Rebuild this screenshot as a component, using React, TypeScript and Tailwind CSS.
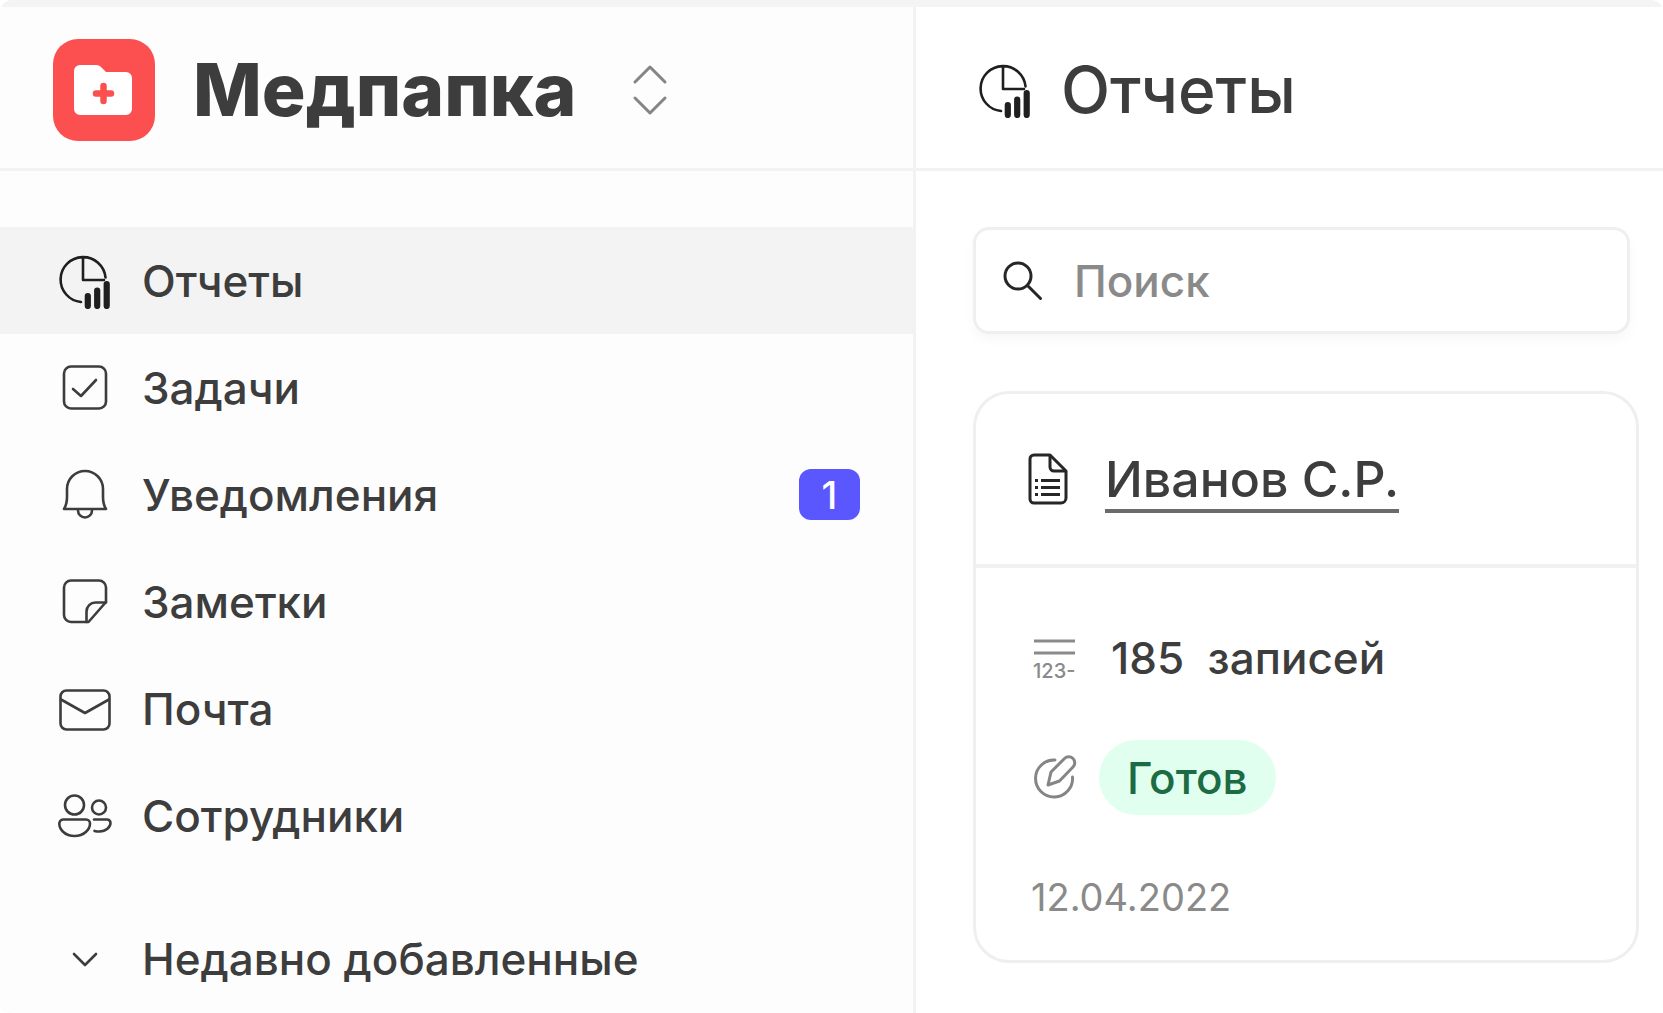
import type { ReactNode } from "react";

type IconProps = { className?: string };

function ReportIcon({ className }: IconProps) {
  return (
    <svg viewBox="0 0 54 56" fill="none" className={className} aria-hidden="true">
      <path d="M23 49A22.500 22.500 0 1 1 47.500 24.500M25 4v23h21" stroke="#1f1f1f" strokeWidth="2.600" strokeLinecap="round" strokeLinejoin="round" />
      <path d="M29.800 43V53M39.200 37.500V53M48.700 31V53" stroke="#1f1f1f" strokeWidth="6.200" strokeLinecap="round" />
    </svg>
  );
}

function LineIcon({ children }: { children: ReactNode }) {
  return (
    <svg viewBox="0 0 54 56" fill="none" stroke="#3d3d3d" strokeWidth="2.600" strokeLinecap="round" strokeLinejoin="round" className="h-14 w-[54px]" aria-hidden="true">
      {children}
    </svg>
  );
}

function TaskIcon() {
  return (
    <LineIcon>
      <rect x="6" y="6.500" width="42" height="42" rx="7" />
      <path d="M15 29l8 7 15-16" />
    </LineIcon>
  );
}

function BellIcon() {
  return (
    <LineIcon>
      <path d="M6 42c2.500-4 3-7 3-12V22a18 18 0 0 1 36 0v8c0 5 .5 8 3 12z" />
      <path d="M20 43.500a7 7 0 0 0 14 0" />
    </LineIcon>
  );
}

function NoteIcon() {
  return (
    <LineIcon>
      <path d="M13 6.500h28a7 7 0 0 1 7 7v14.500L30.500 48H13a7 7 0 0 1-7-7V13.500a7 7 0 0 1 7-7z" />
      <path d="M28.500 48V37.500a9 9 0 0 1 9-9H48" />
    </LineIcon>
  );
}

function MailIcon() {
  return (
    <LineIcon>
      <rect x="2.500" y="9.500" width="49" height="39" rx="6" />
      <path d="M3 18.500l24 13.500L51 18.500" />
    </LineIcon>
  );
}

function PeopleIcon() {
  return (
    <LineIcon>
      <circle cx="16.500" cy="17" r="9.500" />
      <circle cx="41" cy="19.500" r="7" />
      <path d="M5 31.500h23a4 4 0 0 1 4 4c0 6-6 12.500-15.500 12.500S1.300 41.500 1.300 35.500a4 4 0 0 1 3.700-4z" />
      <path d="M36 31.500h13a3.500 3.500 0 0 1 3.500 3.500c0 4-4.500 8.500-11 8.500a20 20 0 0 1-5-.6" />
    </LineIcon>
  );
}

const items = [
  { label: "Отчеты", icon: <ReportIcon className="h-14 w-[54px]" />, active: true },
  { label: "Задачи", icon: <TaskIcon /> },
  { label: "Уведомления", icon: <BellIcon />, count: 1 },
  { label: "Заметки", icon: <NoteIcon /> },
  { label: "Почта", icon: <MailIcon /> },
  { label: "Сотрудники", icon: <PeopleIcon /> },
];

function Sidebar() {
  return (
    <aside className="flex w-[916px] shrink-0 flex-col border-r-3 border-[#f2f2f2] bg-[#fdfdfd]">
      <div className="flex h-[164px] items-center border-b-3 border-[#f2f2f2] pt-1 pl-[53px]">
        <svg viewBox="0 0 102 102" className="size-[102px]" aria-hidden="true">
          <rect width="102" height="102" rx="25" fill="#fc5050" />
          <path d="M27 26h16c3 0 4 1 6 3l4 4h20a6 6 0 0 1 6 6v31a6 6 0 0 1-6 6H27a6 6 0 0 1-6-6V32a6 6 0 0 1 6-6z" fill="#fff" />
          <path d="M50.500 47v15M43 54.500h15" stroke="#fc5050" strokeWidth="6.500" strokeLinecap="round" />
        </svg>
        <span className="ml-[38px] text-[73px] leading-[88px] font-extrabold">Медпапка</span>
        <button type="button" aria-label="Сменить пространство" className="ml-[56px]">
          <svg viewBox="0 0 36 52" fill="none" stroke="#858585" strokeWidth="3" strokeLinecap="round" strokeLinejoin="round" className="h-[52px] w-9">
            <path d="M3 18L18 3l15 15M3 34l15 15 15-15" />
          </svg>
        </button>
      </div>
      <nav className="mt-14 flex flex-col">
        {items.map((item) => (
          <a
            key={item.label}
            href="#"
            aria-current={item.active ? "page" : undefined}
            className={`flex h-[107px] items-center pr-[53px] pl-[58px] ${item.active ? "bg-[#f3f3f3]" : ""}`}
          >
            {item.icon}
            <span className="ml-[30px] flex-1">{item.label}</span>
            {item.count && (
              <span className="flex h-[51px] w-[61px] items-center justify-center rounded-xl bg-[#5b57ff] text-[38px] leading-none text-white">
                {item.count}
              </span>
            )}
          </a>
        ))}
      </nav>
      <button type="button" className="mt-[36px] flex h-[107px] items-center pl-[58px] text-left">
        <LineIcon>
          <path d="M16 23L27 34l11-11" />
        </LineIcon>
        <span className="ml-[30px]">Недавно добавленные</span>
      </button>
    </aside>
  );
}

function ReportCard() {
  return (
    <article className="rounded-[36px] border-3 border-[#efefef] bg-white">
      <div className="flex h-[174px] items-center border-b-4 border-[#f1f1f1] pl-[52px]">
        <svg viewBox="0 0 40 52" fill="none" stroke="#262626" strokeWidth="3" strokeLinejoin="round" className="h-[52px] w-10" aria-hidden="true">
          <path d="M6 2h16l16 16v27a5 5 0 0 1-5 5H6a4 4 0 0 1-4-4V6a4 4 0 0 1 4-4z" />
          <path d="M22 2v12a4 4 0 0 0 4 4h12M13 27.500h19M13 34.500h19M13 41.500h19M7 27.500h3M7 34.500h3M7 41.500h3" />
        </svg>
        <a href="#" className="ml-[37px] border-b-4 border-[#6b6b6b] pt-1 text-[50px] leading-[60px]">Иванов С.Р.</a>
      </div>
      <div className="flex flex-col pl-[55px]">
        <div className="mt-[54px] flex h-[72px] items-center">
          <svg viewBox="0 0 46 48" className="h-12 w-[46px]" aria-hidden="true">
            <path d="M3 7h41M3 19h41" stroke="#8a8a8a" strokeWidth="3" />
            <text x="2" y="44" fill="#8a8a8a" fontSize="20" fontWeight="500">123-</text>
          </svg>
          <span className="ml-[34px] whitespace-pre">185  записей</span>
        </div>
        <div className="mt-[46px] flex h-[75px] items-center">
          <svg viewBox="0 0 46 46" fill="none" stroke="#858585" strokeWidth="3" strokeLinecap="round" strokeLinejoin="round" className="size-[46px]" aria-hidden="true">
            <path d="M24 5A18.500 18.500 0 1 0 41.500 22" />
            <path d="M17 30l3-13L33.500 3.500a6 6 0 0 1 8.500 8.500L28.500 26z" />
          </svg>
          <span className="ml-[22px] flex h-[75px] items-center rounded-full bg-[#e0ffee] px-7 text-[#1d6b44]">Готов</span>
        </div>
        <time dateTime="2022-04-12" className="mt-[58px] mb-[39px] text-[38px] leading-12 font-normal text-[#8a8a8a]">
          12.04.2022
        </time>
      </div>
    </article>
  );
}

export default function App() {
  return (
    <div className="flex min-h-screen flex-col overflow-hidden rounded-xl bg-[#f4f4f4] pt-[7px] font-['Inter',sans-serif] text-[44px] leading-[56px] font-medium text-[#3d3d3d]">
      <div className="flex flex-1">
        <Sidebar />
        <main className="flex min-w-0 flex-1 flex-col bg-white">
          <header className="flex h-[164px] items-center border-b-3 border-[#f2f2f2] pt-1 pl-[62px]">
            <ReportIcon className="h-14 w-[54px]" />
            <h1 className="ml-[29px] text-[64px] leading-[72px]">Отчеты</h1>
          </header>
          <div className="flex flex-col gap-[57px] pt-14 pr-6 pl-[57px]">
            <label className="mr-[9px] flex h-[107px] items-center rounded-2xl border-3 border-[#efefef] bg-white pl-[26px] shadow-[0_6px_12px_rgba(0,0,0,0.03)]">
              <svg viewBox="0 0 42 42" fill="none" stroke="#262626" strokeWidth="3" strokeLinecap="round" className="size-[42px] shrink-0" aria-hidden="true">
                <circle cx="16" cy="16" r="13" />
                <path d="M25.500 25.500l13 13" />
              </svg>
              <input type="search" placeholder="Поиск" aria-label="Поиск" className="ml-[30px] min-w-0 flex-1 outline-none placeholder:text-[#8a8a8a]" />
            </label>
            <ReportCard />
          </div>
        </main>
      </div>
    </div>
  );
}
